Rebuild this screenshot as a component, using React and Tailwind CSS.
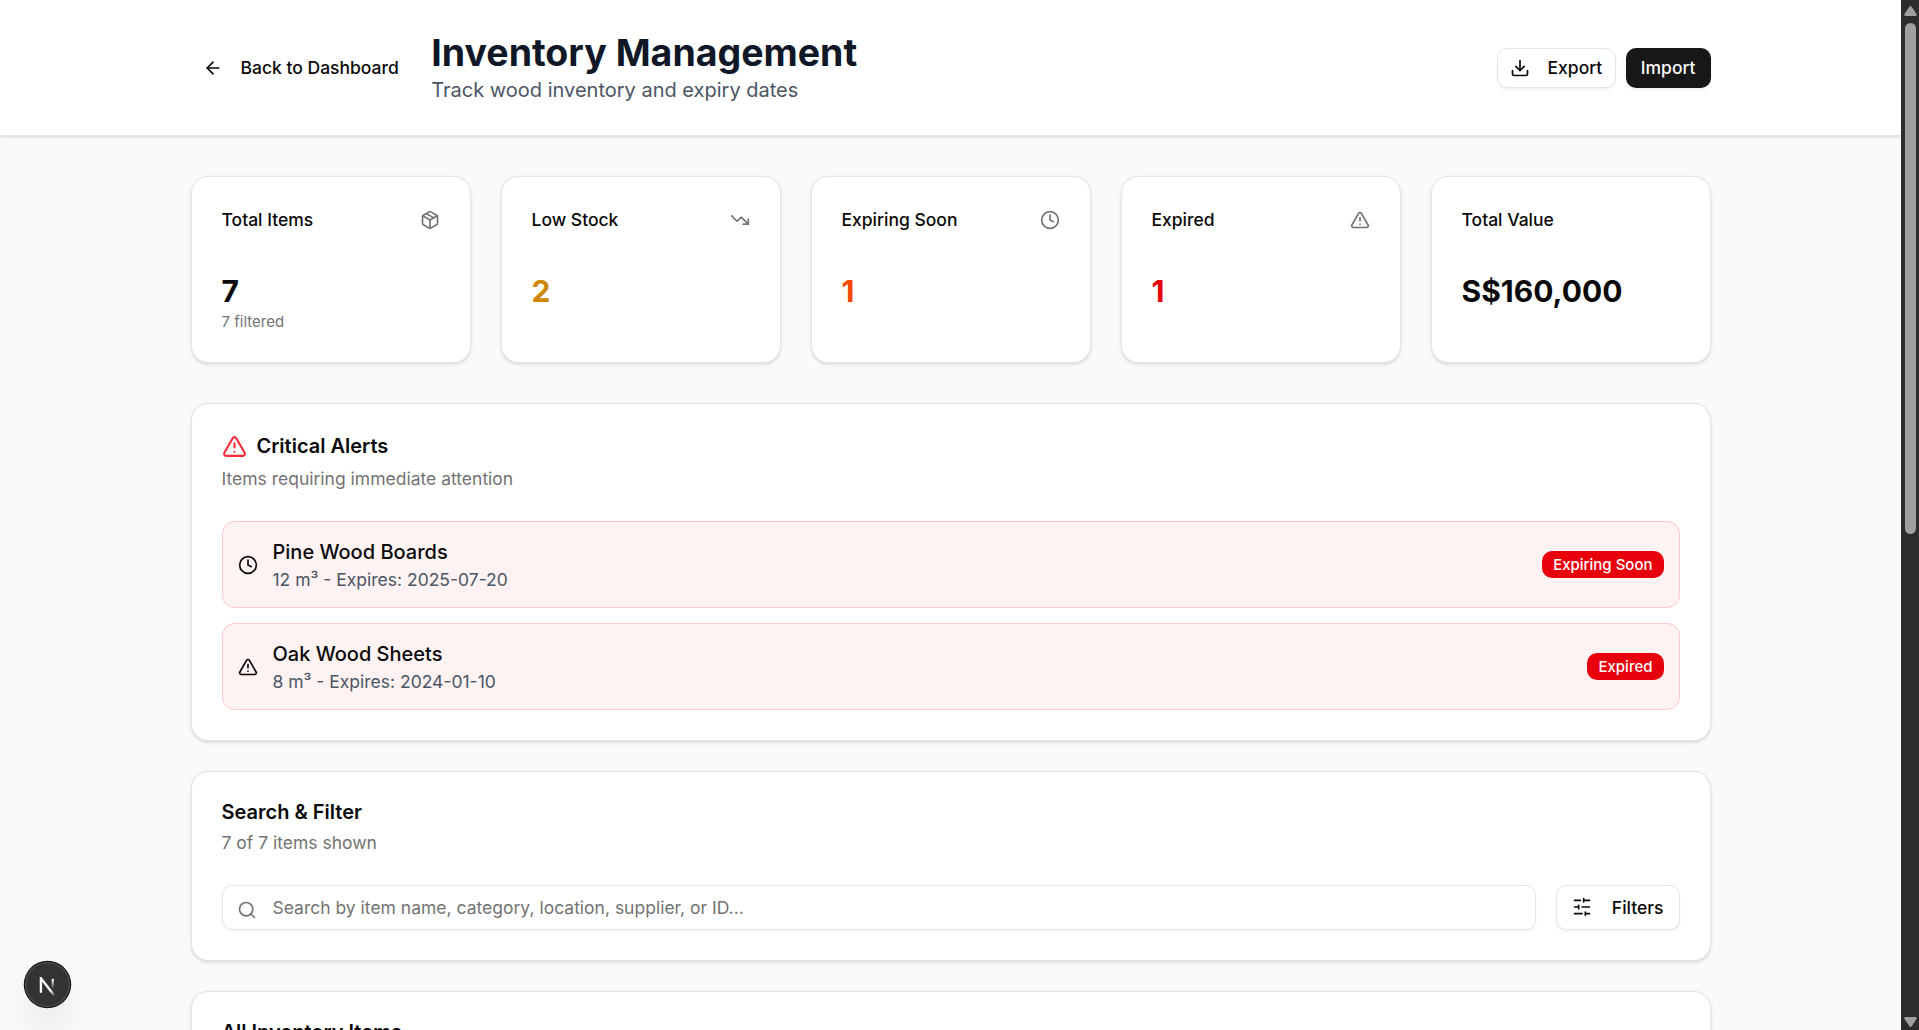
import { AlertTriangle, ArrowLeft, Clock, Download, Package, Search, TrendingDown } from "lucide-react";

const stats = [
  { title: "Total Items", icon: Package, value: "7", color: "", note: "7 filtered" },
  { title: "Low Stock", icon: TrendingDown, value: "2", color: "text-yellow-600" },
  { title: "Expiring Soon", icon: Clock, value: "1", color: "text-orange-600" },
  { title: "Expired", icon: AlertTriangle, value: "1", color: "text-red-600" },
  { title: "Total Value", value: "S$160,000", color: "" },
];

const alerts = [
  { name: "Pine Wood Boards", detail: "12 m³ - Expires: 2025-07-20", icon: Clock, badge: "Expiring Soon" },
  { name: "Oak Wood Sheets", detail: "8 m³ - Expires: 2024-01-10", icon: AlertTriangle, badge: "Expired" },
];

function Card({ className = "", children }) {
  return (
    <div className={`flex flex-col gap-6 rounded-[14px] border border-[#e5e5e5] bg-white py-6 shadow-sm ${className}`}>
      {children}
    </div>
  );
}

function SlidersIcon() {
  return (
    <svg className="mr-2 size-4 shrink-0" viewBox="0 0 24 24" fill="none" stroke="currentColor" strokeWidth="2" strokeLinecap="round" strokeLinejoin="round">
      <path d="M21 4h-7M10 4H3M21 12h-9M8 12H3M21 20h-5M12 20H3M14 2v4M8 10v4M16 18v4" />
    </svg>
  );
}

function NextBadge() {
  return (
    <div className="absolute bottom-[23px] left-[25px] flex size-[45px] items-center justify-center rounded-full bg-[#333333] pt-1 shadow-[0_0_0_1.25px_#171717,inset_0_0_0_1.25px_rgba(255,255,255,0.14),0_20px_40px_-10px_rgba(0,0,0,0.24)]">
      <svg className="size-5" viewBox="0 0 16 16" fill="none">
        <defs>
          <linearGradient id="diagonal" x1="9.95" y1="11.12" x2="15.48" y2="17.97" gradientUnits="userSpaceOnUse">
            <stop stopColor="#fff" />
            <stop offset="0.604" stopColor="#fff" stopOpacity="0" />
            <stop offset="1" stopColor="#fff" stopOpacity="0" />
          </linearGradient>
          <linearGradient id="stem" x1="11.82" y1="1.4" x2="11.79" y2="9.63" gradientUnits="userSpaceOnUse">
            <stop stopColor="#fff" />
            <stop offset="1" stopColor="#fff" stopOpacity="0" />
          </linearGradient>
        </defs>
        <path d="M13.3 15.2L2.34 1V12.6" stroke="url(#diagonal)" strokeWidth="1.86" />
        <path d="M11.825 1.5V13.1" stroke="url(#stem)" strokeWidth="1.86" />
      </svg>
    </div>
  );
}

function Scrollbar() {
  return (
    <div className="flex w-[18px] shrink-0 flex-col items-center bg-[#2c2c2c]">
      <svg className="mt-1.5 h-[10px] w-[13px] shrink-0" viewBox="0 0 13 10" fill="#9f9f9f">
        <path d="M5.4.7a1.3 1.3 0 0 1 2.2 0l4.9 7.2a1.3 1.3 0 0 1-1.1 2.1H1.6A1.3 1.3 0 0 1 .5 7.900Z" />
      </svg>
      <div className="mt-[7px] ml-px h-[511px] w-[11px] rounded-full bg-[#9f9f9f]" />
      <svg className="mt-auto mb-[3px] h-[10px] w-[13px] shrink-0 rotate-180" viewBox="0 0 13 10" fill="#9f9f9f">
        <path d="M5.4.7a1.3 1.3 0 0 1 2.2 0l4.9 7.2a1.3 1.3 0 0 1-1.1 2.1H1.6A1.3 1.3 0 0 1 .5 7.900Z" />
      </svg>
    </div>
  );
}

export default function App() {
  return (
    <div className="relative flex h-[1030px] w-full overflow-hidden bg-gray-50 font-['Inter',sans-serif]">
      <div className="min-w-0 flex-1 overflow-hidden">
        <div className="text-[#0a0a0a] [zoom:1.25]">
          <header className="border-b border-[#e5e5e5] bg-white shadow-sm">
            <div className="mx-auto flex max-w-7xl items-center justify-between px-8 py-6">
              <div className="flex items-center gap-4">
                <button className="flex h-8 items-center gap-1.5 rounded-lg px-2.5 text-sm font-medium">
                  <ArrowLeft className="mr-2 size-4" />
                  Back to Dashboard
                </button>
                <div>
                  <h1 className="text-3xl font-bold text-gray-900">Inventory Management</h1>
                  <p className="text-gray-600">Track wood inventory and expiry dates</p>
                </div>
              </div>
              <div className="flex items-center gap-2">
                <button className="flex h-8 items-center gap-1.5 rounded-lg border border-[#e5e5e5] bg-white px-2.5 text-sm font-medium shadow-xs">
                  <Download className="mr-2 size-4" />
                  Export
                </button>
                <button className="flex h-8 items-center rounded-lg bg-[#171717] px-3 text-sm font-medium text-[#fafafa] shadow-xs">
                  Import
                </button>
              </div>
            </div>
          </header>

          <main className="mx-auto max-w-7xl px-8 py-8">
            <div className="mb-8 grid grid-cols-5 gap-6">
              {stats.map(({ title, icon: Icon, value, color, note }) => (
                <Card key={title}>
                  <div className="flex items-center justify-between px-6 pb-2">
                    <div className="text-sm font-medium">{title}</div>
                    {Icon && <Icon className="size-4 text-[#737373]" />}
                  </div>
                  <div className="px-6">
                    <div className={`text-2xl font-bold ${color}`}>{value}</div>
                    {note && <p className="text-xs text-[#737373]">{note}</p>}
                  </div>
                </Card>
              ))}
            </div>

            <div className="flex flex-col gap-6">
              <Card>
                <div className="flex flex-col gap-1.5 px-6">
                  <div className="flex items-center gap-2 leading-none font-semibold">
                    <AlertTriangle className="size-5 text-red-500" />
                    Critical Alerts
                  </div>
                  <div className="text-sm text-[#737373]">Items requiring immediate attention</div>
                </div>
                <div className="flex flex-col gap-3 px-6">
                  {alerts.map(({ name, detail, icon: Icon, badge }) => (
                    <div key={name} className="flex items-center justify-between rounded-[10px] border border-red-200 bg-red-50 p-3">
                      <div className="flex items-center gap-3">
                        <Icon className="size-4" />
                        <div>
                          <p className="font-medium">{name}</p>
                          <p className="text-sm text-gray-600">{detail}</p>
                        </div>
                      </div>
                      <span className="rounded-lg border border-transparent bg-red-600 px-2 py-0.5 text-xs font-medium text-white">
                        {badge}
                      </span>
                    </div>
                  ))}
                </div>
              </Card>

              <Card>
                <div className="flex flex-col gap-1.5 px-6">
                  <div className="leading-none font-semibold">Search &amp; Filter</div>
                  <div className="text-sm text-[#737373]">7 of 7 items shown</div>
                </div>
                <div className="flex gap-4 px-6">
                  <div className="relative flex-1">
                    <Search className="absolute top-3 left-3 size-4 text-[#737373]" />
                    <input
                      className="h-9 w-full rounded-lg border border-[#e5e5e5] bg-transparent py-1 pr-3 pl-10 text-sm shadow-xs placeholder:text-[#737373]"
                      placeholder="Search by item name, category, location, supplier, or ID..."
                    />
                  </div>
                  <button className="flex h-9 items-center gap-2 rounded-lg border border-[#e5e5e5] bg-white px-3 text-sm font-medium shadow-xs">
                    <SlidersIcon />
                    Filters
                  </button>
                </div>
              </Card>

              <Card>
                <div className="px-6 leading-none font-semibold">All Inventory Items</div>
              </Card>
            </div>
          </main>
        </div>
      </div>
      <Scrollbar />
      <NextBadge />
    </div>
  );
}
